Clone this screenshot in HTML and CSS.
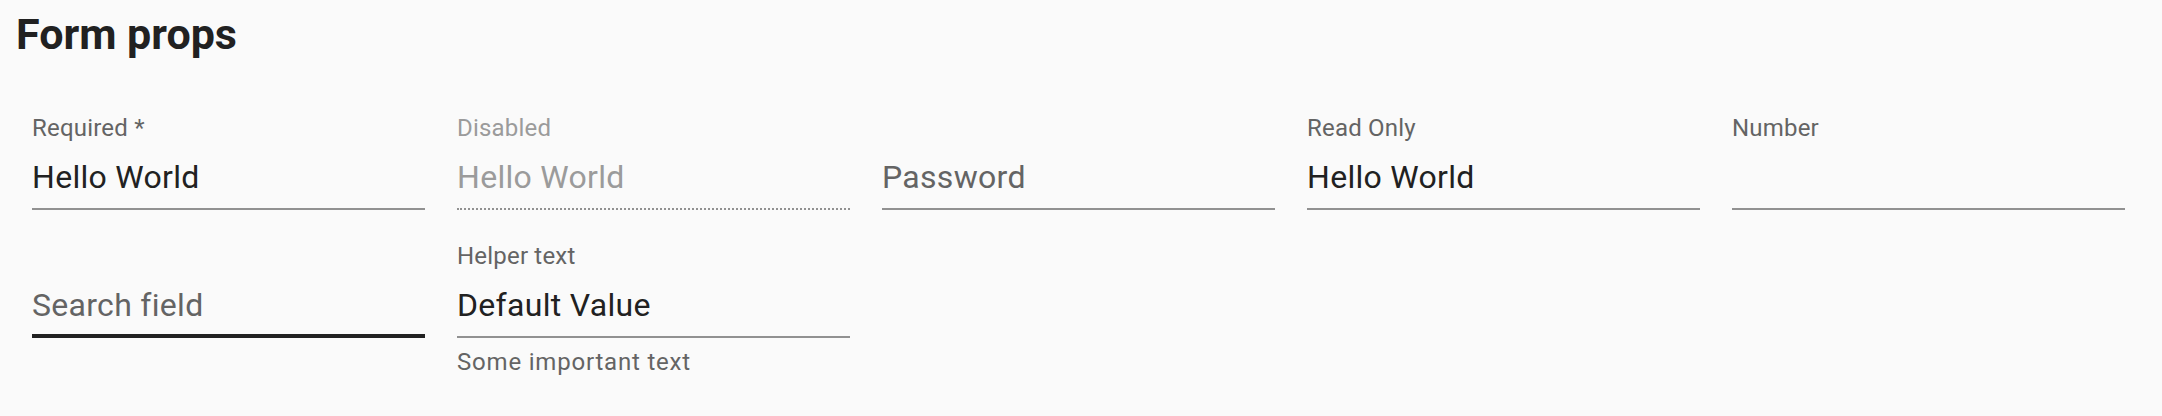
FILE: index.html
```html
<!DOCTYPE html>
<html lang="en">
<head>
<meta charset="utf-8">
<title>Form props</title>
<link rel="stylesheet" href="styles.css">
</head>
<body>
<main class="page">
  <h2 class="title">Form props</h2>
  <div class="row">
    <div class="field">
      <div class="label">Required *</div>
      <div class="input">Hello World</div>
    </div>
    <div class="field disabled">
      <div class="label">Disabled</div>
      <div class="input">Hello World</div>
    </div>
    <div class="field">
      <div class="label"></div>
      <div class="input placeholder">Password</div>
    </div>
    <div class="field">
      <div class="label">Read Only</div>
      <div class="input">Hello World</div>
    </div>
    <div class="field">
      <div class="label">Number</div>
      <div class="input"></div>
    </div>
  </div>
  <div class="row">
    <div class="field hover">
      <div class="label"></div>
      <div class="input placeholder">Search field</div>
    </div>
    <div class="field">
      <div class="label">Helper text</div>
      <div class="input">Default Value</div>
      <div class="helper">Some important text</div>
    </div>
  </div>
</main>
</body>
</html>
```

FILE: styles.css
```css
html, body {
  margin: 0;
  padding: 0;
  background: #fafafa;
}

body {
  font-family: Roboto, "Noto Sans", Arial, sans-serif;
  color: #212121;
}

.page {
  padding: 9px 16px 0 16px;
}

.title {
  margin: 0 0 39px 0;
  font-size: 43px;
  font-weight: 700;
  line-height: 50px;
  color: #212121;
}

.row {
  display: flex;
  flex-wrap: wrap;
  align-items: flex-start;
}

.field {
  width: 393px;
  margin: 16px;
  display: flex;
  flex-direction: column;
}

.label {
  height: 32px;
  font-size: 24px;
  line-height: 29px;
  color: #646464;
  letter-spacing: 0.2px;
  white-space: nowrap;
}

.input {
  box-sizing: border-box;
  height: 64px;
  padding: 8px 0 8px 0;
  font-size: 32px;
  line-height: 46px;
  letter-spacing: 0.3px;
  color: #212121;
  border-bottom: 2px solid #919191;
  white-space: nowrap;
}

.input.placeholder {
  color: #646464;
}

.disabled .label,
.disabled .input {
  color: #9b9b9b;
}

.disabled .input {
  border-bottom-style: dotted;
}

.hover .input {
  border-bottom: 4px solid #212121;
  padding-bottom: 6px;
}

.helper {
  margin-top: 4px;
  font-size: 24px;
  line-height: 40px;
  letter-spacing: 0.8px;
  color: #646464;
  white-space: nowrap;
}
```
